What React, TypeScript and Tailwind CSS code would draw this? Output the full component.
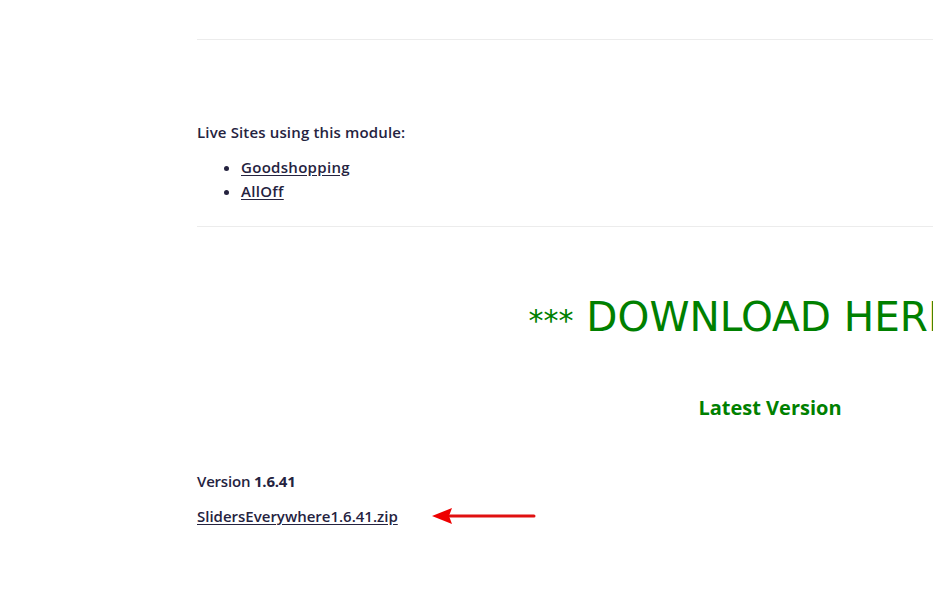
import React from "react";

export default function App() {
  const font = { fontFamily: '"Open Sans", "DejaVu Sans", sans-serif' };
  return (
    <div className="w-[933px] h-[600px] overflow-hidden bg-white">
      <div className="ml-[197px] w-[1146px] text-[#25233f]" style={font}>
        <div className="h-[39px]" />
        <div className="h-px bg-[#ececec]" />
        <div className="h-[82px]" />
        <p className="text-[15px] leading-[20px] font-semibold tracking-[0.15px]">Live Sites using this module:</p>
        <ul className="mt-[13px] list-disc pl-[44px] text-[15px] leading-[24px] font-semibold tracking-[0.3px]">
          <li><a className="underline underline-offset-2">Goodshopping</a></li>
          <li><a className="underline underline-offset-2">AllOff</a></li>
        </ul>
        <div className="h-[23px]" />
        <div className="h-px bg-[#ececec]" />
        <div className="mt-[64px] text-center text-[#008000] text-[40.5px] leading-[52px]" style={{ fontFamily: '"DejaVu Sans", sans-serif' }}>
          <span className="text-[30px]">***</span> DOWNLOAD HERE <span className="text-[30px]">***</span>
        </div>
        <div className="mt-[47px] text-center text-[#008000] text-[20px] leading-[28px] font-bold">Latest Version</div>
        <div className="h-[49px]" />
        <p className="text-[15px] leading-[20px] font-semibold tracking-[-0.2px]">Version <b className="font-bold">1.6.41</b></p>
        <div className="mt-[15px] flex items-center">
          <a className="text-[15px] leading-[20px] font-semibold underline underline-offset-2">SlidersEverywhere1.6.41.zip</a>
          <svg className="ml-[34px]" width="104" height="18" viewBox="0 0 104 18">
            <line x1="18" y1="9" x2="102" y2="9" stroke="#e01010" strokeWidth="3" strokeLinecap="round" />
            <polygon points="0,9 20,1 17,9 20,17" fill="#ee0000" />
          </svg>
        </div>
      </div>
    </div>
  );
}
